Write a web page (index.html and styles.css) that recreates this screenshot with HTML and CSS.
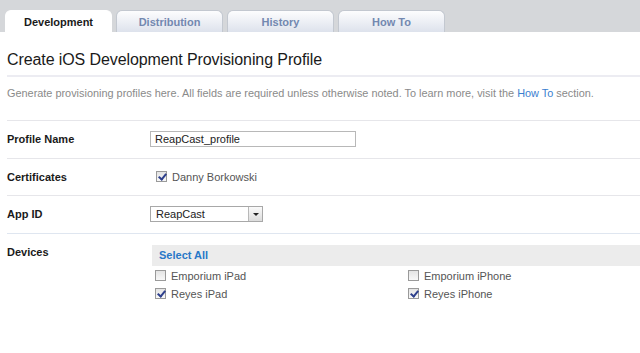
FILE: index.html
```html
<!DOCTYPE html>
<html lang="en">
<head>
    <meta charset="UTF-8">
    <title>Create iOS Development Provisioning Profile</title>
    <link rel="stylesheet" href="styles.css">
</head>
<body>

<div id="tabs">
    <div class="tab active">Development</div>
    <div class="tab">Distribution</div>
    <div class="tab">History</div>
    <div class="tab">How To</div>
</div>

<div id="page">
    <h1>Create iOS Development Provisioning Profile</h1>
    <p class="intro">Generate provisioning profiles here. All fields are required unless otherwise noted. To learn more, visit the <a href="#">How To</a> section.</p>

    <div class="row">
        <label class="name" for="profile">Profile Name</label>
        <input type="text" id="profile" value="ReapCast_profile"/>
    </div>
    <div class="row">
        <div class="name">Certificates</div>
        <div class="check cert"><span class="box on"></span>Danny Borkowski</div>
    </div>
    <div class="row">
        <div class="name">App ID</div>
        <div class="select">
            <span>ReapCast</span>
            <span class="arrow"></span>
        </div>
    </div>
    <div class="row devices">
        <div class="name">Devices</div>
        <div class="list">
            <div class="all">Select All</div>
            <div class="grid">
                <div class="check"><span class="box"></span>Emporium iPad</div>
                <div class="check"><span class="box"></span>Emporium iPhone</div>
                <div class="check"><span class="box on"></span>Reyes iPad</div>
                <div class="check"><span class="box on"></span>Reyes iPhone</div>
            </div>
        </div>
    </div>
</div>

</body>
</html>
```

FILE: styles.css
```css
* {
    margin: 0;
    padding: 0;
    box-sizing: border-box;
    font-family: 'Liberation Sans', Arial, sans-serif;
}

body {
    background: #fff;
    font-size: 11px;
    color: #222;
}

#tabs {
    height: 32px;
    background: #d5d7da;
    display: flex;
    align-items: flex-end;
    gap: 4px;
    padding-left: 5px;
}

.tab {
    width: 107px;
    height: 22px;
    line-height: 22px;
    text-align: center;
    font-weight: bold;
    font-size: 11px;
    color: #7388b0;
    border-radius: 6px 6px 0 0;
    background: linear-gradient(#fdfdfe, #dde2ec);
    border: 1px solid #c3c8d0;
    border-bottom: none;
}

.tab.active {
    background: #fff;
    color: #1a1a1a;
    border-color: #fff;
}

#page {
    padding-left: 7px;
}

h1 {
    font-size: 16px;
    font-weight: normal;
    letter-spacing: -0.1px;
    color: #1a1a1a;
    height: 45px;
    padding-top: 19px;
    border-bottom: 2px solid #ececf2;
}

.intro {
    color: #8a8a8a;
    font-size: 10.9px;
    height: 44px;
    padding-top: 10px;
    border-bottom: 1px solid #e6e6ea;
}

.intro a {
    color: #3b7fd0;
    text-decoration: none;
}

.row {
    display: flex;
    align-items: center;
    height: 37.5px;
    border-bottom: 1px solid #e6e6ea;
}

.row:nth-child(5) {
    border-bottom-color: #dfe6f0;
}

.name {
    width: 143px;
    font-weight: bold;
    font-size: 11px;
    color: #1a1a1a;
}

input[type="text"] {
    width: 206px;
    height: 16px;
    border: 1px solid #b8b8b8;
    padding: 0 4px;
    font-size: 11px;
    color: #222;
    font-family: 'Liberation Sans', Arial, sans-serif;
}

.check {
    display: flex;
    align-items: center;
    color: #555;
    height: 18px;
}

.cert {
    margin-left: 6px;
}

.box {
    width: 11px;
    height: 11px;
    border: 1px solid #9a9a9a;
    background: linear-gradient(#e4e4e4, #f8f8f8);
    margin-right: 5px;
    position: relative;
}

.box.on::after {
    content: '';
    position: absolute;
    left: 3px;
    top: 0;
    width: 3px;
    height: 6px;
    border: solid #2d3f8c;
    border-width: 0 2px 2px 0;
    transform: rotate(40deg);
}

.select {
    width: 113px;
    height: 16px;
    border: 1px solid #a8a8a8;
    display: flex;
    align-items: center;
    justify-content: space-between;
    padding-left: 5px;
}

.arrow {
    width: 14px;
    height: 14px;
    border-left: 1px solid #b8b8b8;
    background: linear-gradient(#fafafa, #dcdcdc);
    position: relative;
}

.arrow::after {
    content: '';
    position: absolute;
    left: 4px;
    top: 6px;
    border: 3px solid transparent;
    border-top: 3px solid #222;
}

.row.devices {
    align-items: flex-start;
    border-bottom: none;
    height: auto;
    padding-top: 11px;
}

.row.devices .name {
    padding-top: 1px;
}

.list {
    flex: 1;
    margin-left: 2px;
}

.all {
    height: 21px;
    line-height: 21px;
    background: #ececec;
    color: #2878c8;
    font-weight: bold;
    font-size: 11px;
    padding-left: 7px;
}

.grid {
    display: grid;
    grid-template-columns: 253px 1fr;
    padding-left: 3px;
    padding-top: 1px;
}
```
